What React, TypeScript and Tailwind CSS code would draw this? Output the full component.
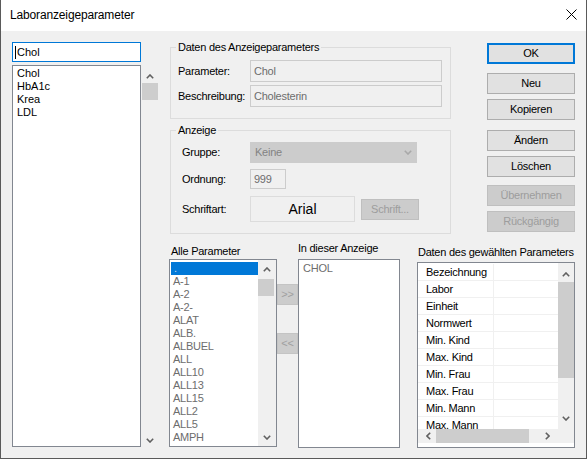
type Dir = "up" | "down" | "left" | "right";

function Arrow({ dir, color = "#606060" }: { dir: Dir; color?: string }) {
	const vertical = dir === "up" || dir === "down";
	const pts = {
		up: "0.8,4.2 4,1 7.2,4.2",
		down: "0.8,0.8 4,4 7.2,0.8",
		left: "4.2,0.8 1,4 4.2,7.2",
		right: "0.8,0.8 4,4 0.8,7.2",
	}[dir];
	return (
		<svg
			width={vertical ? 8 : 5}
			height={vertical ? 5 : 8}
			viewBox={vertical ? "0 0 8 5" : "0 0 5 8"}
		>
			<polyline points={pts} fill="none" stroke={color} strokeWidth="1.6" />
		</svg>
	);
}

const btn =
	"w-[88px] h-[21px] flex items-center justify-center border bg-[#e1e1e1] border-[#adadad] text-black";
const btnOff =
	"w-[88px] h-[21px] flex items-center justify-center border bg-[#cccccc] border-[#bfbfbf] text-[#9d9d9d]";
const disabledField =
	"h-[22px] border border-[#cccccc] bg-[#f0f0f0] text-[#6d6d6d] flex items-center pl-[3px]";

const alleParameter = [
	"A-1",
	"A-2",
	"A-2-",
	"ALAT",
	"ALB.",
	"ALBUEL",
	"ALL",
	"ALL10",
	"ALL13",
	"ALL15",
	"ALL2",
	"ALL5",
	"AMPH",
];

const datenZeilen = [
	"Bezeichnung",
	"Labor",
	"Einheit",
	"Normwert",
	"Min. Kind",
	"Max. Kind",
	"Min. Frau",
	"Max. Frau",
	"Min. Mann",
	"Max. Mann",
];

export default function App() {
	return (
		<div className="w-[587px] h-[459px] flex flex-col border-x border-b border-[#5a5a5a] bg-[#f0f0f0] font-['Liberation_Sans',Arial,sans-serif] text-[11px] leading-[13px] tracking-[-0.25px] text-black overflow-hidden">
			{/* title bar */}
			<div className="h-[31px] shrink-0 bg-white flex items-center justify-between pl-[9px] pr-[9px]">
				<span className="text-[12px] tracking-[-0.15px]">Laboranzeigeparameter</span>
				<svg width="11" height="11" viewBox="0 0 11 11" className="-mt-[3px]">
					<path d="M0.5 0.5 L10.5 10.5 M10.5 0.5 L0.5 10.5" stroke="#000" strokeWidth="1" />
				</svg>
			</div>

			<div className="flex-1 flex pt-[10px] pl-[11px]">
				{/* left column */}
				<div className="w-[146px] flex flex-col mt-[1px]">
					<div className="w-[129px] h-[20px] border border-[#0078d7] bg-white flex items-center pl-[2px]">
						<span className="w-px h-[13px] bg-black mr-px" />
						<span className="tracking-normal">Chol</span>
					</div>
					<div className="flex mt-[3px]">
						<div className="w-[129px] h-[382px] border border-[#828790] bg-white pt-[1px] pl-[4px] tracking-normal">
							<div>Chol</div>
							<div>HbA1c</div>
							<div>Krea</div>
							<div>LDL</div>
						</div>
						<div className="w-[16px] ml-[1px] flex flex-col">
							<div className="h-[18px] pt-[4px] flex items-center justify-center">
								<Arrow dir="up" />
							</div>
							<div className="h-[17px] bg-[#cdcdcd]" />
							<div className="flex-1" />
							<div className="h-[14px] flex items-center justify-center">
								<Arrow dir="down" />
							</div>
						</div>
					</div>
				</div>

				{/* right area */}
				<div className="ml-[11px] flex flex-col">
					<div className="flex">
						<div className="ml-[1px] w-[281px] flex flex-col">
							<fieldset className="border border-[#dcdcdc] pl-[7px] pt-[6px] pb-[11px]">
								<legend className="px-[2px] -ml-[2px]">Daten des Anzeigeparameters</legend>
								<div className="flex items-center">
									<span className="w-[72px]">Parameter:</span>
									<div className={`w-[192px] ${disabledField}`}>Chol</div>
								</div>
								<div className="flex items-center mt-[3px]">
									<span className="w-[72px]">Beschreibung:</span>
									<div className={`w-[192px] ${disabledField}`}>Cholesterin</div>
								</div>
							</fieldset>

							<fieldset className="mt-[5px] border border-[#dcdcdc] pl-[7px] pt-[5px] pb-[11px]">
								<legend className="px-[2px] -ml-[2px]">Anzeige</legend>
								<div className="flex items-center pl-[4px]">
									<span className="w-[68px]">Gruppe:</span>
									<div className="w-[167px] h-[21px] border border-[#cccccc] bg-[#cccccc] text-[#838383] flex items-center justify-between pl-[4px] pr-[4px]">
										<span>Keine</span>
										<Arrow dir="down" color="#a8a8a8" />
									</div>
								</div>
								<div className="flex items-center pl-[4px] mt-[6px]">
									<span className="w-[68px]">Ordnung:</span>
									<div className="w-[36px] h-[20px] border border-[#cccccc] bg-[#f0f0f0] text-[#6d6d6d] flex items-center pl-[3px]">
										999
									</div>
								</div>
								<div className="flex items-center pl-[4px] mt-[7px]">
									<span className="w-[68px]">Schriftart:</span>
									<div className="w-[105px] h-[26px] border border-[#dcdcdc] flex items-center justify-center text-[14px] tracking-normal">
										Arial
									</div>
									<div className="ml-[6px] w-[58px] h-[21px] border border-[#bfbfbf] bg-[#cccccc] text-[#9d9d9d] flex items-center justify-center">
										Schrift...
									</div>
								</div>
							</fieldset>
						</div>

						<div className="ml-[36px] mt-[2px] w-[88px] flex flex-col">
							<div className="w-[88px] h-[21px] flex items-center justify-center border-2 border-[#0078d7] bg-[#e1e1e1]">
								OK
							</div>
							<div className={`${btn} mt-[9px]`}>Neu</div>
							<div className={`${btn} mt-[5px]`}>Kopieren</div>
							<div className={`${btn} mt-[10px]`}>Ändern</div>
							<div className={`${btn} mt-[5px]`}>Löschen</div>
							<div className={`${btnOff} mt-[8px]`}>Übernehmen</div>
							<div className={`${btnOff} mt-[5px]`}>Rückgängig</div>
						</div>
					</div>

					{/* lower lists */}
					<div className="flex items-start mt-[8px]">
						<div className="w-[108px] flex flex-col">
							<div className="h-[17px] pt-[3px] pl-[2px]">Alle Parameter</div>
							<div className="h-[188px] border border-[#828790] bg-white flex">
								<div className="w-[88px] pt-[2px] pl-[1px] text-[#6d6d6d]">
									<div className="h-[13px] bg-[#0078d7] pl-[3px] text-[#c8d8ec]">.</div>
									{alleParameter.map((p) => (
										<div key={p} className="h-[13px] pl-[2px]">
											{p}
										</div>
									))}
								</div>
								<div className="flex-1 flex flex-col bg-[#f0f0f0]">
									<div className="h-[19px] flex items-center justify-center">
										<Arrow dir="up" />
									</div>
									<div className="h-[17px] mr-[2px] bg-[#cdcdcd]" />
									<div className="flex-1" />
									<div className="h-[18px] flex items-center justify-center">
										<Arrow dir="down" />
									</div>
								</div>
							</div>
						</div>

						<div className="w-[21px] flex flex-col text-[#a0a0a0]">
							<div className="mt-[42px] h-[21px] bg-[#cccccc] border border-[#c4c4c4] flex items-center justify-center">
								&gt;&gt;
							</div>
							<div className="mt-[28px] h-[21px] bg-[#cccccc] border border-[#c4c4c4] flex items-center justify-center">
								&lt;&lt;
							</div>
						</div>

						<div className="w-[102px] flex flex-col">
							<div className="h-[17px]">In dieser Anzeige</div>
							<div className="h-[189px] border border-[#828790] bg-white pt-[2px] pl-[4px] text-[#6d6d6d]">
								CHOL
							</div>
						</div>

						<div className="ml-[17px] w-[158px] flex flex-col">
							<div className="h-[20px] pt-[4px] pl-[1px] whitespace-nowrap">Daten des gewählten Parameters</div>
							<div className="h-[186px] border border-[#828790] bg-white flex flex-col">
								<div className="h-[166px] flex">
									<div className="w-[140px] pt-[1px] overflow-hidden">
										{datenZeilen.map((z) => (
											<div key={z} className="h-[17px] flex border-b border-[#f0f0f0]">
												<div className="w-[76px] pl-[8px] flex items-center border-r border-[#f0f0f0]">
													{z}
												</div>
												<div className="flex-1" />
											</div>
										))}
									</div>
									<div className="w-[16px] flex flex-col bg-[#f0f0f0]">
										<div className="h-[19px] pt-[3px] flex items-center justify-center">
											<Arrow dir="up" />
										</div>
										<div className="h-[96px] bg-[#cdcdcd]" />
										<div className="flex-1" />
										<div className="h-[22px] flex items-center justify-center">
											<Arrow dir="down" />
										</div>
									</div>
								</div>
								<div className="h-[14px] flex">
									<div className="w-[140px] flex bg-[#f0f0f0]">
										<div className="w-[18px] pl-[3px] flex items-center justify-center">
											<Arrow dir="left" />
										</div>
										<div className="w-[93px] bg-[#cdcdcd]" />
										<div className="flex-1 flex items-center justify-center pl-[8px]">
											<Arrow dir="right" />
										</div>
									</div>
									<div className="w-[16px] bg-[#f0f0f0]" />
								</div>
							</div>
						</div>
					</div>
				</div>
			</div>
		</div>
	);
}
